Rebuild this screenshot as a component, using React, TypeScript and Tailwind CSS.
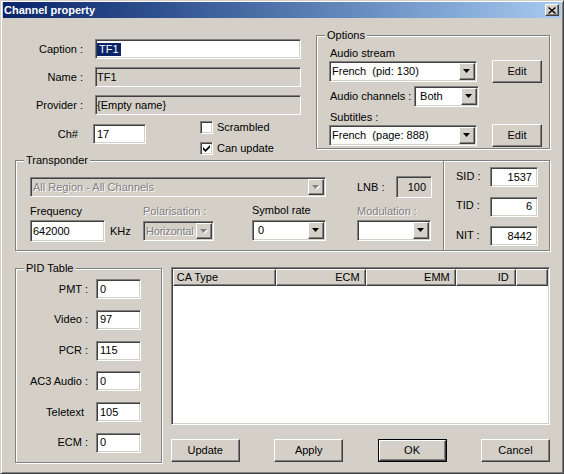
import React from "react";

const sunken =
  "border border-t-[#808080] border-l-[#808080] border-b-white border-r-white shadow-[inset_1px_1px_0_#404040,inset_-1px_-1px_0_#d4d0c8] p-[1px]";
const raised =
  "border border-t-white border-l-white border-b-[#404040] border-r-[#404040] shadow-[inset_-1px_-1px_0_#808080] bg-[#d4d0c8]";
const dis = "text-[#808080] [text-shadow:1px_1px_0_#fff]";

function Arrow({ disabled = false }: { disabled?: boolean }) {
  return (
    <svg width="8" height="5" viewBox="0 0 8 5">
      {disabled ? <path d="M1 1h7L4.5 5z" fill="#fff" /> : null}
      <path d="M0 0h7L3.5 4z" fill={disabled ? "#808080" : "#000"} />
    </svg>
  );
}

function Combo({
  className = "",
  text = "",
  disabled = false,
}: {
  className?: string;
  text?: string;
  disabled?: boolean;
}) {
  return (
    <div className={`${sunken} flex ${disabled ? "bg-[#d4d0c8]" : "bg-white"} ${className}`}>
      <div
        className={`flex-1 flex items-center pl-[1px] whitespace-pre overflow-hidden ${disabled ? dis : ""}`}
      >
        {text}
      </div>
      <div className={`${raised} w-[16px] flex items-center justify-center`}>
        <Arrow disabled={disabled} />
      </div>
    </div>
  );
}

function Field({
  className = "",
  children,
  gray = false,
}: {
  className?: string;
  children?: React.ReactNode;
  gray?: boolean;
}) {
  return (
    <div
      className={`${sunken} flex items-center whitespace-pre overflow-hidden ${gray ? "bg-[#d4d0c8]" : "bg-white"} ${className}`}
    >
      {children}
    </div>
  );
}

function Button({
  className = "",
  children,
  def = false,
}: {
  className?: string;
  children: React.ReactNode;
  def?: boolean;
}) {
  if (def) {
    return (
      <div className={`border border-black flex ${className}`}>
        <div className={`${raised} flex-1 flex items-center justify-center`}>{children}</div>
      </div>
    );
  }
  return <div className={`${raised} flex items-center justify-center ${className}`}>{children}</div>;
}

function Check({ checked = false, label }: { checked?: boolean; label: string }) {
  return (
    <div className="flex items-center h-[13px]">
      <div className={`${sunken} bg-white w-[13px] h-[13px] flex items-center justify-center p-0`}>
        {checked ? (
          <svg width="7" height="7" viewBox="0 0 7 7">
            <path d="M0 2L2.5 4.5L7 0V2.5L2.5 7L0 4.5z" fill="#000" />
          </svg>
        ) : null}
      </div>
      <span className="ml-[4px]">{label}</span>
    </div>
  );
}

function Group({
  label,
  className = "",
  children,
}: {
  label: string;
  className?: string;
  children?: React.ReactNode;
}) {
  return (
    <div
      className={`relative border border-[#808080] shadow-[inset_1px_1px_0_#fff,1px_1px_0_#fff] ${className}`}
    >
      <span className="absolute top-[-7px] left-[8px] px-[2px] bg-[#d4d0c8] leading-[13px] whitespace-pre">
        {label}
      </span>
      {children}
    </div>
  );
}

function PidRow({ label, value, extra = "" }: { label: string; value: string; extra?: string }) {
  return (
    <div className="flex items-center h-[20px]">
      <div className={`w-[72px] text-right ${extra}`}>{label}</div>
      <Field className="ml-[8px] w-[45px] h-[20px] pl-[3px]">{value}</Field>
    </div>
  );
}

function IdRow({ label, value }: { label: string; value: string }) {
  return (
    <div className="flex items-center h-[20px]">
      <div className="w-[34px] -mt-[2px]">{label}</div>
      <Field className="w-[48px] h-[20px] justify-end pr-[5px]">{value}</Field>
    </div>
  );
}

export default function App() {
  return (
    <div className="w-[564px] h-[474px] bg-[#d4d0c8] border border-t-[#d4d0c8] border-l-[#d4d0c8] border-b-[#404040] border-r-[#404040] shadow-[inset_1px_1px_0_#fff,inset_-1px_-1px_0_#808080] pt-[1px] px-[2px] font-['Liberation_Sans',Arial,sans-serif] text-[11px] leading-[13px] text-black overflow-hidden select-none">
      {/* Title bar */}
      <div className="h-[16px] flex items-center justify-between bg-linear-to-r from-[#0a246a] to-[#a6caf0] pl-[1px] pr-[2px]">
        <span className="font-bold text-white text-[11px]">Channel property</span>
        <div className={`${raised} w-[14px] h-[12px] flex items-center justify-center`}>
          <svg width="8" height="7" viewBox="0 0 8 7">
            <path d="M0.5 0.5l7 6M7.5 0.5l-7 6" stroke="#000" strokeWidth="1.4" />
          </svg>
        </div>
      </div>

      {/* Content */}
      <div className="flex flex-col pl-[12px] pr-[11px]">
        {/* Row 1 */}
        <div className="mt-[17px] flex h-[114px]">
          <div className="w-[301px] flex flex-col">
            <div className="mt-[4px] flex items-center h-[20px]">
              <div className="w-[68px] text-right">Caption :</div>
              <Field className="ml-[12px] w-[206px] h-[20px]">
                <span className="bg-[#0a246a] text-white px-[2px]">TF1</span>
              </Field>
            </div>
            <div className="mt-[8px] flex items-center h-[20px]">
              <div className="w-[68px] text-right">Name :</div>
              <Field gray className="ml-[12px] w-[206px] h-[20px]">
                TF1
              </Field>
            </div>
            <div className="mt-[8px] flex items-center h-[20px]">
              <div className="w-[68px] text-right">Provider :</div>
              <Field gray className="ml-[12px] w-[206px] h-[20px]">
                {"{Empty name}"}
              </Field>
            </div>
            <div className="mt-[6px] flex items-start">
              <div className="mt-[3px] flex items-center">
                <div className="w-[63px] text-right">Ch#</div>
                <Field className="ml-[15px] w-[53px] h-[20px] pl-[3px]">17</Field>
              </div>
              <div className="ml-[54px] flex flex-col gap-[8px]">
                <Check label="Scrambled" />
                <Check checked label="Can update" />
              </div>
            </div>
          </div>

          <Group label="Options" className="w-[234px] h-[114px]">
            <div className="flex flex-col pl-[12px]">
              <div className="mt-[11px] h-[13px] pl-[1px]">Audio stream</div>
              <div className="flex items-center h-[23px]">
                <Combo className="w-[148px] h-[21px]" text="French  (pid: 130)" />
                <Button className="ml-[15px] w-[50px] h-[23px]">Edit</Button>
              </div>
              <div className="mt-[3px] flex items-center h-[21px]">
                <div className="w-[85px] pl-[1px]">Audio channels :</div>
                <Combo className="w-[65px] h-[21px]" text=" Both" />
              </div>
              <div className="mt-[4px] h-[13px] pl-[1px]">Subtitles :</div>
              <div className="flex items-center h-[23px]">
                <Combo className="w-[148px] h-[21px]" text="French  (page: 888)" />
                <Button className="ml-[15px] w-[50px] h-[23px]">Edit</Button>
              </div>
            </div>
          </Group>
        </div>

        {/* Row 2: Transponder */}
        <Group label="Transponder" className="mt-[11px] w-[535px] h-[91px]">
          <div className="flex h-full">
            <div className="w-[427px] flex flex-col pl-[14px]">
              <div className="mt-[15px] flex items-center h-[22px]">
                <Combo disabled className="w-[296px] h-[20px]" text="All Region - All Channels" />
                <div className="ml-[31px] w-[39px]">LNB :</div>
                <Field gray className="w-[36px] h-[22px] justify-end pr-[5px]">
                  100
                </Field>
              </div>
              <div className="mt-[7px] flex">
                <div className="w-[113px] flex flex-col">
                  <div className="h-[13px]">Frequency</div>
                  <div className="mt-[2px] flex items-center">
                    <Field className="w-[75px] h-[22px] pl-[2px]">642000</Field>
                    <span className="ml-[5px]">KHz</span>
                  </div>
                </div>
                <div className="w-[109px] flex flex-col">
                  <div className={`h-[13px] ${dis}`}>Polarisation :</div>
                  <Combo disabled className="mt-[3px] w-[71px] h-[20px] tracking-[-0.2px]" text="Horizontal" />
                </div>
                <div className="w-[105px] flex flex-col">
                  <div className="h-[13px] -mt-[1px]">Symbol rate</div>
                  <Combo className="mt-[3px] w-[74px] h-[21px]" text=" 0" />
                </div>
                <div className="w-[74px] flex flex-col">
                  <div className={`h-[13px] ${dis}`}>Modulation :</div>
                  <Combo className="mt-[2px] w-[74px] h-[21px]" text="" />
                </div>
              </div>
            </div>
            <div className="flex-1 border-l border-[#808080] shadow-[inset_1px_0_0_#fff] flex flex-col pl-[12px] pt-[6px] gap-[9.5px]">
              <IdRow label="SID :" value="1537" />
              <IdRow label="TID :" value="6" />
              <IdRow label="NIT :" value="8442" />
            </div>
          </div>
        </Group>

        {/* Row 3 */}
        <div className="mt-[16px] flex items-start gap-[9px]">
          <Group label="PID Table" className="mt-[1px] w-[147px] h-[195px]">
            <div className="flex flex-col pt-[10px] gap-[10.8px]">
              <PidRow label="PMT :" value="0" />
              <PidRow label="Video :" value="97" />
              <PidRow label="PCR :" value="115" />
              <PidRow label="AC3 Audio :" value="0" />
              <PidRow label="Teletext" value="105" extra="pr-[4px]" />
              <PidRow label="ECM :" value="0" />
            </div>
          </Group>

          <div className="w-[380px] flex flex-col">
            <div className={`${sunken} bg-white h-[158px] flex flex-col`}>
              <div className="flex h-[17px]">
                <div className={`${raised} w-[103px] flex items-center pl-[3px]`}>CA Type</div>
                <div className={`${raised} w-[90px] flex items-center justify-end pr-[5px]`}>ECM</div>
                <div className={`${raised} w-[90px] flex items-center justify-end pr-[5px]`}>EMM</div>
                <div className={`${raised} w-[60px] flex items-center justify-end pr-[6px]`}>ID</div>
                <div className={`${raised} flex-1`} />
              </div>
            </div>
            <div className="mt-[14px] flex justify-between">
              <Button className="w-[69px] h-[23px]">Update</Button>
              <Button className="w-[69px] h-[23px]">Apply</Button>
              <Button def className="w-[69px] h-[23px]">
                OK
              </Button>
              <Button className="w-[69px] h-[23px]">Cancel</Button>
            </div>
          </div>
        </div>
      </div>
    </div>
  );
}
